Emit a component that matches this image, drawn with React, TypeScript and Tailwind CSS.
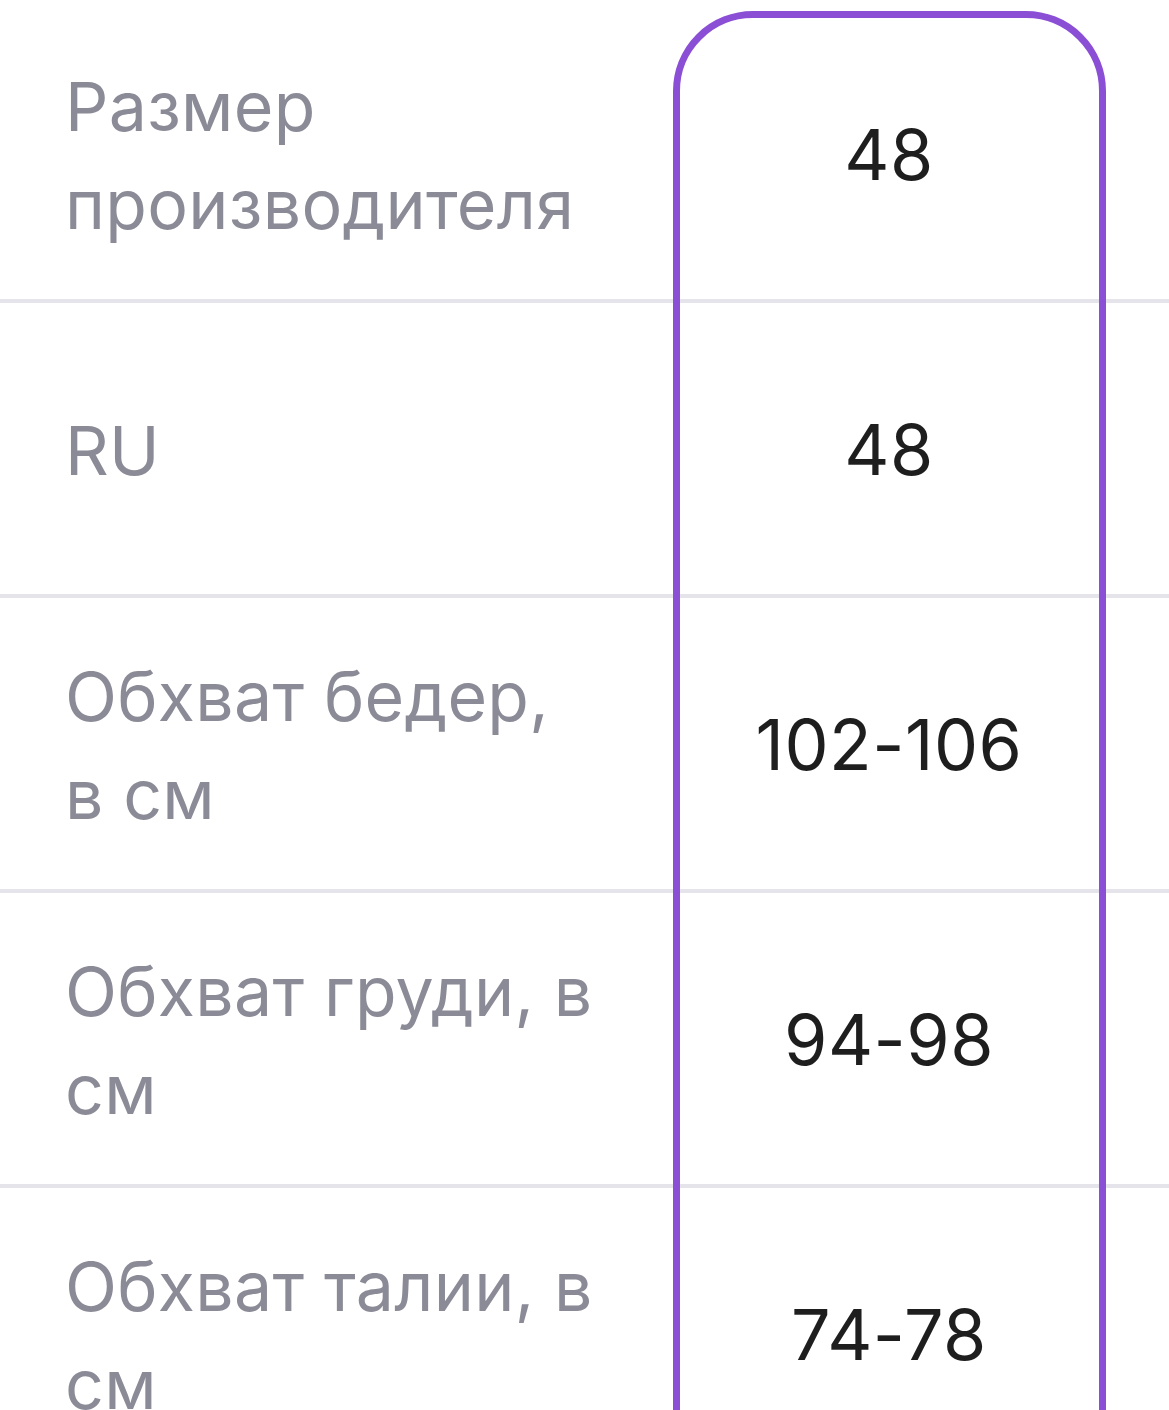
import React from "react";

const rows = [
  { label: ["Размер", "производителя"], value: "48" },
  { label: ["RU"], value: "48" },
  { label: ["Обхват бедер,", "в см"], value: "102-106" },
  { label: ["Обхват груди, в", "см"], value: "94-98" },
  { label: ["Обхват талии, в", "см"], value: "74-78" },
];

export default function App() {
  return (
    <div
      className="relative w-[1169px] h-[1410px] overflow-hidden bg-white"
      style={{ fontFamily: "Inter, 'Noto Sans', sans-serif" }}
    >
      <div className="flex flex-col">
        {rows.map((r, i) => (
          <div
            key={i}
            className={`flex items-center border-b-[4px] border-[#e4e4ea] ${i === 0 ? "h-[303px] pt-[10px]" : "h-[295px] pt-[3px]"}`}
          >
            <div className="w-[676px] pl-[65px] text-[68px] leading-[98px] text-[#8b8b97] tracking-[0.3px]">
              {r.label.map((l, j) => (
                <div key={j}>{l}</div>
              ))}
            </div>
            <div className="w-[426px] text-center text-[70px] leading-[98px] text-[#1e1e1e] tracking-[0.5px]">
              {r.value}
            </div>
          </div>
        ))}
      </div>
      <div className="absolute left-[673px] top-[11px] w-[433px] h-[1560px] rounded-[80px] border-[7px] border-[#8b4fd6]" />
    </div>
  );
}
